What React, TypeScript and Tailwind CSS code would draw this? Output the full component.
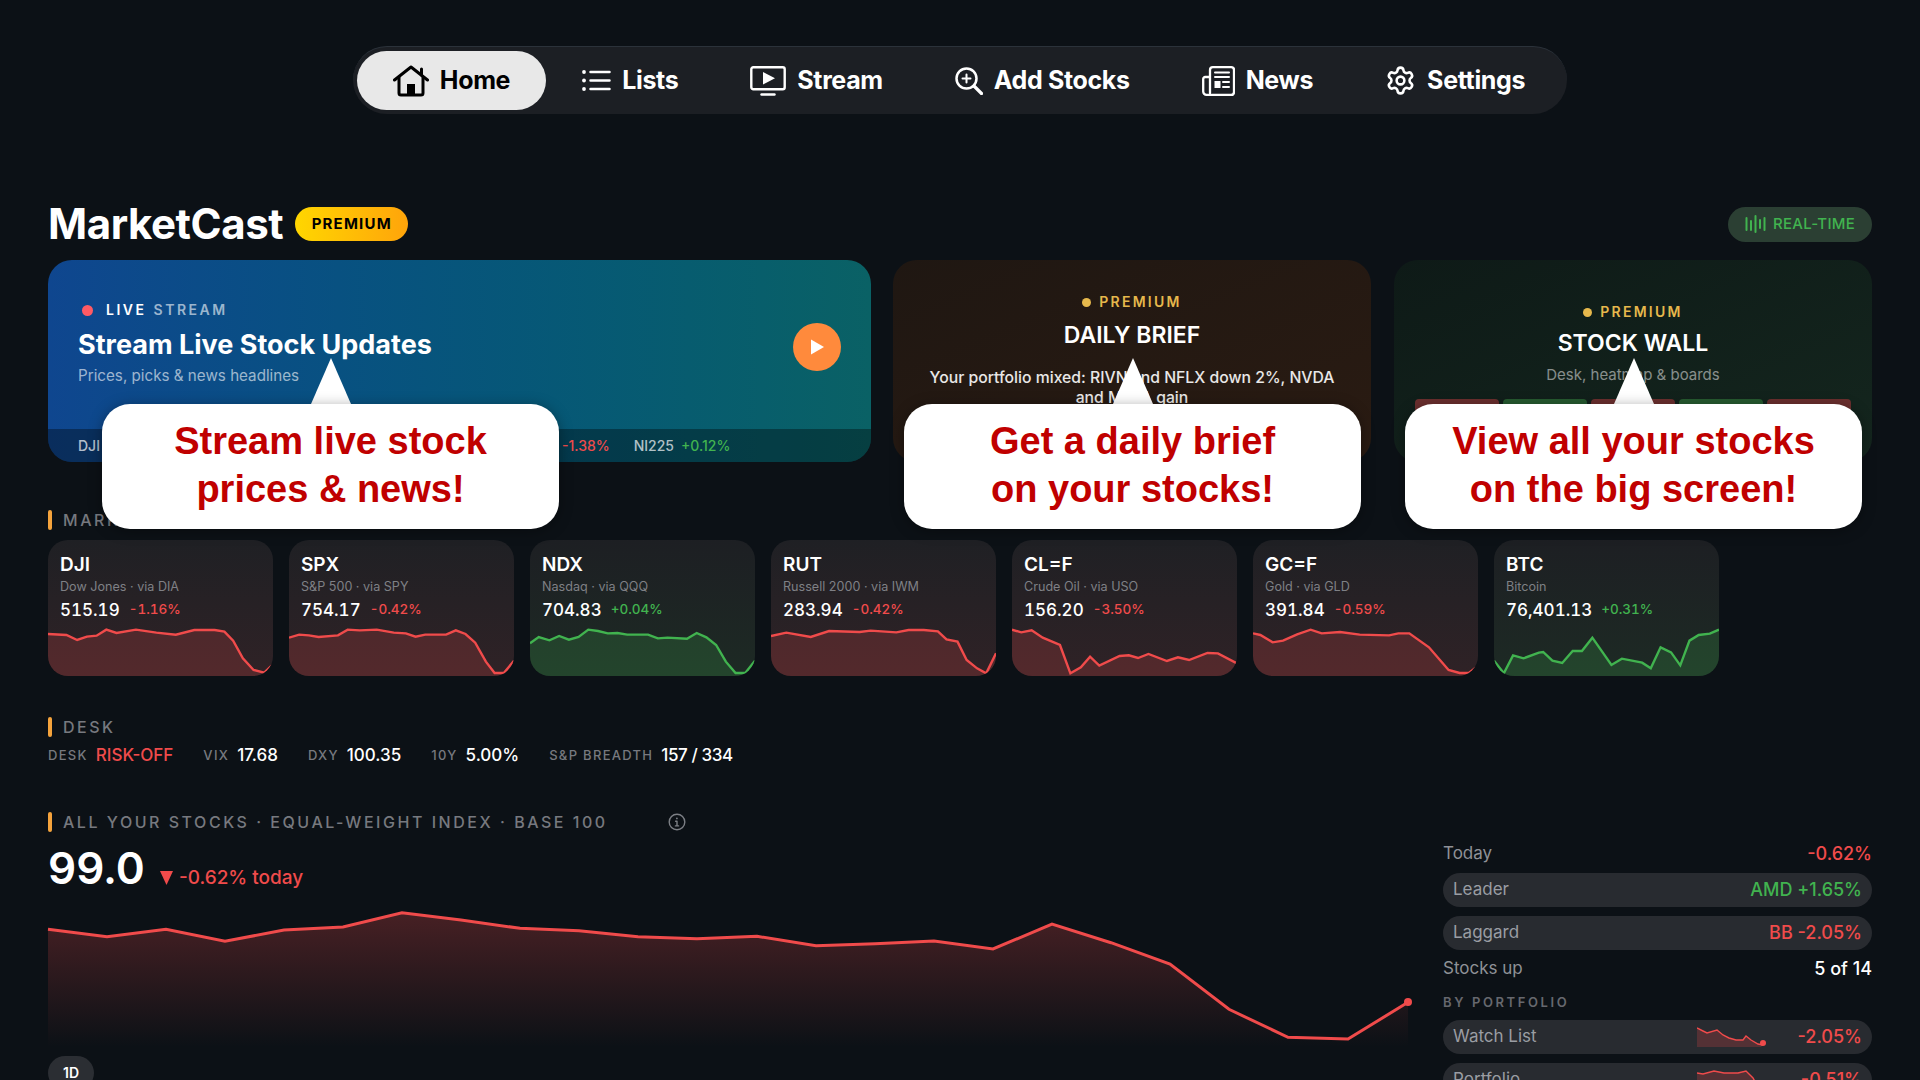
import { Settings } from 'lucide-react'

const RED = '#f04b4b'
const GREEN = '#41b34f'

type Market = {
  ticker: string
  name: string
  price: string
  change: string
  up: boolean
  ox: number
  w: number
  pts: string
}

const markets: Market[] = [
  {
    ticker: 'DJI',
    name: 'Dow Jones · via DIA',
    price: '515.19',
    change: '-1.16%',
    up: false,
    ox: 37,
    w: 463,
    pts: '37,312 75,315 97,330 117,320 137,317 157,299 178,309 218,299 260,308 300,314 338,300 380,300 400,305 418,332 438,385 460,420 482,428 500,403',
  },
  {
    ticker: 'SPX',
    name: 'S&P 500 · via SPY',
    price: '754.17',
    change: '-0.42%',
    up: false,
    ox: 534,
    w: 464,
    pts: '534,323 555,314 575,316 595,321 635,316 655,299 680,301 715,299 750,308 775,310 795,320 815,314 858,314 878,301 898,312 918,338 940,395 958,429 977,429 998,392',
  },
  {
    ticker: 'NDX',
    name: 'Nasdaq · via QQQ',
    price: '704.83',
    change: '+0.04%',
    up: true,
    ox: 1032,
    w: 463,
    pts: '1032,340 1050,321 1072,331 1092,318 1112,329 1132,321 1152,299 1172,303 1192,310 1212,309 1232,314 1275,314 1295,325 1315,323 1355,326 1375,309 1395,322 1415,345 1435,395 1455,429 1475,429 1495,392',
  },
  {
    ticker: 'RUT',
    name: 'Russell 2000 · via IWM',
    price: '283.94',
    change: '-0.42%',
    up: false,
    ox: -15,
    w: 368,
    pts: '-15,318 10,308 50,321 80,303 130,306 148,302 190,307 210,300 235,300 258,304 272,328 290,335 305,390 322,415 337,430 353,370',
  },
  {
    ticker: 'CL=F',
    name: 'Crude Oil · via USO',
    price: '156.20',
    change: '-3.50%',
    up: false,
    ox: 380,
    w: 366,
    pts: '380,299 395,307 412,301 430,323 458,345 475,430 492,412 507,380 522,407 555,378 570,376 585,384 602,372 632,393 650,382 668,390 698,369 715,370 746,400',
  },
  {
    ticker: 'GC=F',
    name: 'Gold · via GLD',
    price: '391.84',
    change: '-0.59%',
    up: false,
    ox: 773,
    w: 367,
    pts: '773,310 785,315 805,337 822,332 845,313 867,299 885,310 915,306 947,314 995,316 1010,310 1028,310 1060,352 1092,420 1110,429 1125,429 1140,408',
  },
  {
    ticker: 'BTC',
    name: 'Bitcoin',
    price: '76,401.13',
    change: '+0.31%',
    up: true,
    ox: 1167,
    w: 366,
    pts: '1167,392 1183,430 1198,376 1215,385 1240,368 1247,366 1262,392 1278,399 1295,363 1310,363 1327,323 1358,405 1375,386 1408,398 1422,415 1438,352 1455,367 1470,406 1485,332 1500,315 1518,311 1533,299',
  },
]

const tickers = [
  ['DJI', '-1.16%', false],
  ['SPX', '-0.42%', false],
  ['NDX', '+0.04%', true],
  ['RUT', '-0.42%', false],
  ['VIX', '-1.38%', false],
  ['NI225', '+0.12%', true],
] as const

const indexLine =
  '48,929.3 107,936.7 166,929.3 225,941.3 284,930 343,927 402,912.7 461,920 520,928.3 579,930.7 638,936.7 697,938.7 757,936.3 816,945.7 875,943.7 934,941 993,949 1052,924 1111,942.7 1170,964 1229,1009.3 1288,1037.3 1348,1039 1408,1002.3'

function HomeIcon() {
  return (
    <svg width="36" height="32" viewBox="0 0 36 32" fill="none" stroke="currentColor" strokeWidth="3" strokeLinecap="round" strokeLinejoin="round">
      <path d="M1.5 15 18 2l16.5 13" />
      <path d="M28.5 4v6" />
      <path d="M6 12v16a2 2 0 0 0 2 2h20a2 2 0 0 0 2-2V12" />
      <rect x="14" y="19" width="8" height="11" fill="currentColor" stroke="none" />
    </svg>
  )
}

function ListIcon() {
  return (
    <svg width="29" height="21" viewBox="0 0 29 21" fill="none" stroke="currentColor" strokeWidth="2.5" strokeLinecap="round">
      <circle cx="2" cy="2" r="1.9" fill="currentColor" stroke="none" />
      <circle cx="2" cy="10.5" r="1.9" fill="currentColor" stroke="none" />
      <circle cx="2" cy="19" r="1.9" fill="currentColor" stroke="none" />
      <path d="M8.5 2h19M8.5 10.5h19M8.5 19h19" />
    </svg>
  )
}

function StreamIcon() {
  return (
    <svg width="36" height="30" viewBox="0 0 36 30" fill="none" stroke="currentColor" strokeWidth="2.4" strokeLinecap="round" strokeLinejoin="round">
      <rect x="1.3" y="1.3" width="33.4" height="22" rx="2" />
      <path d="M13 6l12 6.3L13 18.6z" fill="currentColor" stroke="none" />
      <path d="M11.5 28.5h13" />
    </svg>
  )
}

function AddIcon() {
  return (
    <svg width="28" height="28" viewBox="0 0 28 28" fill="none" stroke="currentColor" strokeWidth="2.5" strokeLinecap="round">
      <circle cx="11.5" cy="11.5" r="10" />
      <path d="M11.5 7.5v8M7.5 11.5h8" strokeWidth="2" />
      <path d="M19 19l7.5 7.5" strokeWidth="3.2" />
    </svg>
  )
}

function NewsIcon() {
  return (
    <svg width="33" height="30" viewBox="0 0 33 30" fill="none" stroke="currentColor" strokeWidth="2.3" strokeLinecap="round" strokeLinejoin="round">
      <path d="M8 27V4a2.8 2.8 0 0 1 2.8-2.8h18.4A2.8 2.8 0 0 1 32 4v22a2.8 2.8 0 0 1-2.8 2.8H4.5A3.3 3.3 0 0 1 1.2 25.5V13a2 2 0 0 1 2-2H8" />
      <path d="M13 6.5h14M13 11h14M21 16h6M21 21h6" strokeWidth="2" />
      <rect x="12.5" y="15" width="6" height="7" fill="currentColor" stroke="none" />
    </svg>
  )
}

function PulseIcon() {
  return (
    <svg width="21" height="18" viewBox="0 0 21 18" fill="none" stroke="currentColor" strokeWidth="2" strokeLinecap="round">
      <path d="M1.5 3v12M6 6v9M10.5 1v16M15 5v8M19.5 3v12" />
    </svg>
  )
}

function InfoIcon() {
  return (
    <svg width="18" height="18" viewBox="0 0 18 18" fill="none" stroke="#7c7f85" strokeWidth="1.4" strokeLinecap="round">
      <circle cx="9" cy="9" r="7.8" />
      <path d="M9 8.2v4.6M7.4 12.9h3.2M7.6 8.2H9" />
      <circle cx="8.9" cy="5.4" r="0.9" fill="#7c7f85" stroke="none" />
    </svg>
  )
}

function NavItem({ label, icon, active }: { label: string; icon: React.ReactNode; active?: boolean }) {
  return (
    <div
      className={
        active
          ? 'flex h-[59px] items-center gap-[11px] rounded-full bg-[#e8e8e8] px-9 text-black'
          : 'flex h-[59px] items-center gap-[11px] px-9 text-white'
      }
    >
      {icon}
      <span className="text-[25px] leading-none font-bold tracking-[-0.014em]">{label}</span>
    </div>
  )
}

function SectionLabel({ children }: { children: React.ReactNode }) {
  return (
    <div className="flex h-5 items-center gap-[11px]">
      <span className="h-5 w-1 rounded-full bg-[#f5a33c]" />
      <span className="text-base font-medium tracking-[0.158em] whitespace-nowrap text-[#77797f]">{children}</span>
    </div>
  )
}

function Premium() {
  return (
    <div className="flex h-5 items-center gap-2 text-sm font-semibold tracking-[0.16em] text-[#e6b84c]">
      <span className="h-[9px] w-[9px] rounded-full bg-[#e6b84c]" />
      PREMIUM
    </div>
  )
}

function Callout({ line1, line2, className }: { line1: string; line2: string; className: string }) {
  return (
    <div className={`absolute top-[358px] flex w-[457px] flex-col items-center ${className}`}>
      <div className="h-0 w-0 border-x-[20px] border-b-[46px] border-x-transparent border-b-white" />
      <div className="flex h-[125px] w-full flex-col items-center justify-center rounded-[28px] bg-white pb-[4px] font-['Liberation_Sans',sans-serif] text-[38px] leading-[48px] font-bold text-[#c00000] shadow-[0_2px_14px_rgba(0,0,0,0.35)]">
        <span>{line1}</span>
        <span>{line2}</span>
      </div>
    </div>
  )
}

function MarketCard({ m }: { m: Market }) {
  const color = m.up ? GREEN : RED
  return (
    <div
      className={
        m.up
          ? 'flex h-[136px] w-[225px] flex-col overflow-hidden rounded-[20px] bg-gradient-to-b from-[#1d1f23] to-[#1d2a24]'
          : 'flex h-[136px] w-[225px] flex-col overflow-hidden rounded-[20px] bg-gradient-to-b from-[#1f2024] to-[#2f2226]'
      }
    >
      <div className="h-[80px] px-3 pt-[14px]">
        <div className="h-[22px] text-[19px] leading-[22px] font-semibold text-white">{m.ticker}</div>
        <div className="mt-[2px] h-[17px] text-[12.6px] leading-[17px] text-[#7f8085]">{m.name}</div>
        <div className="mt-[4px] flex h-[22px] items-center gap-[9px] tabular-nums">
          <span className="text-[17px] leading-none font-medium text-white">{m.price}</span>
          <span className={m.up ? 'text-[13.5px] leading-none font-medium text-[#41b34f]' : 'text-[13.5px] leading-none font-medium text-[#f04b4b]'}>
            {m.change}
          </span>
        </div>
      </div>
      <svg className="h-14 w-full" viewBox={`${m.ox} 270 ${m.w} 168`} preserveAspectRatio="none">
        <polygon points={`${m.ox},438 ${m.pts} ${m.ox + m.w},438`} fill={color} fillOpacity="0.19" />
        <polyline points={m.pts} fill="none" stroke={color} strokeWidth="2.4" vectorEffect="non-scaling-stroke" />
      </svg>
    </div>
  )
}

function DeskStat({ label, value, valueClass = 'text-white' }: { label: string; value: string; valueClass?: string }) {
  return (
    <div className="flex items-center gap-2">
      <span className="text-[13px] font-medium tracking-[0.1em] text-[#77797f]">{label}</span>
      <span className={`text-[17px] font-medium ${valueClass}`}>{value}</span>
    </div>
  )
}

function StatPill({ label, value, valueClass }: { label: string; value: string; valueClass: string }) {
  return (
    <div className="flex h-[34px] items-center justify-between rounded-full bg-[#282b30] px-[10px]">
      <span className="text-[17px] text-[#9a9da3]">{label}</span>
      <span className={`text-lg font-medium ${valueClass}`}>{value}</span>
    </div>
  )
}

function PortfolioPill({ label, value, pts, dot }: { label: string; value: string; pts: string; dot: [number, number] }) {
  return (
    <div className="flex h-[34px] items-center rounded-full bg-[#282b30] px-[10px]">
      <span className="flex-1 text-[17px] text-[#9a9da3]">{label}</span>
      <svg width="70" height="20" viewBox="0 0 70 20" fill="none">
        <polygon points={`0,20 ${pts} 64,20`} fill={RED} fillOpacity="0.22" />
        <polyline points={pts} stroke={RED} strokeWidth="1.4" />
        <circle cx={dot[0]} cy={dot[1]} r="3" fill={RED} />
      </svg>
      <span className="w-[95px] text-right text-lg font-medium text-[#f04b4b]">{value}</span>
    </div>
  )
}

export default function App() {
  return (
    <div className="relative h-[1080px] w-[1920px] overflow-hidden bg-[#0c1116] font-['Inter',sans-serif]">
      <div className="flex justify-center pt-[46px]">
        <nav className="flex h-[68px] items-center rounded-full border-t border-[#2b323a] bg-[#1c1f24] px-[4px] pr-[6px]">
          <NavItem label="Home" icon={<HomeIcon />} active />
          <NavItem label="Lists" icon={<ListIcon />} />
          <NavItem label="Stream" icon={<StreamIcon />} />
          <NavItem label="Add Stocks" icon={<AddIcon />} />
          <NavItem label="News" icon={<NewsIcon />} />
          <NavItem label="Settings" icon={<Settings size={31} strokeWidth={2} />} />
        </nav>
      </div>

      <main className="px-12">
        <header className="mt-[92px] flex h-9 items-center">
          <h1 className="text-[42px] leading-none font-bold tracking-[-0.01em] text-white">MarketCast</h1>
          <span className="ml-3 flex h-[34px] w-[113px] items-center justify-center rounded-full bg-gradient-to-r from-[#ffd600] to-[#ffa40a] text-[15px] font-bold tracking-[0.08em] text-black">
            PREMIUM
          </span>
          <span className="ml-auto flex h-[35px] w-[144px] items-center justify-center gap-[7px] rounded-full bg-[#2b3f33] text-[15px] font-medium tracking-[0.02em] text-[#41b34f]">
            <PulseIcon />
            REAL-TIME
          </span>
        </header>

        <section className="mt-[18px] flex h-[202px] gap-[22px]">
          <div className="flex w-[823px] flex-col overflow-hidden rounded-[24px] bg-gradient-to-r from-[#0f468f] to-[#0a6165]">
            <div className="flex flex-1 items-center justify-between pr-[30px] pl-[30px]">
              <div className="mb-[3px]">
                <div className="flex h-5 items-center text-sm font-semibold tracking-[0.18em]">
                  <span className="mr-[13px] ml-1 h-[11px] w-[11px] rounded-full bg-[#ff5a64]" />
                  <span className="text-white">LIVE</span>
                  <span className="ml-[7px] text-white/60">STREAM</span>
                </div>
                <div className="mt-[8px] text-[27px] leading-[34px] font-bold text-white">Stream Live Stock Updates</div>
                <div className="mt-[4px] text-[15.2px] leading-5 text-white/60">Prices, picks &amp; news headlines</div>
              </div>
              <div className="mt-[4px] flex h-12 w-12 items-center justify-center rounded-full bg-[#ff8a3c]">
                <svg width="16" height="18" viewBox="0 0 16 18" fill="white">
                  <path d="M2 1.5 15 9 2 16.5z" />
                </svg>
              </div>
            </div>
            <div className="flex h-[33px] items-center gap-6 bg-black/35 pl-[30px] text-sm font-medium">
              {tickers.map(([name, change, up]) => (
                <div key={name} className="flex items-center gap-[7px] first:mr-[21px]">
                  <span className="text-white/70">{name}</span>
                  <span className={up ? 'text-[#41b34f]' : 'text-[#f04b4b]'}>{change}</span>
                </div>
              ))}
            </div>
          </div>

          <div className="flex w-[478px] flex-col items-center rounded-[24px] bg-gradient-to-br from-[#1f1712] to-[#2a1b12] pt-[32px]">
            <Premium />
            <div className="mt-[8px] text-[23px] leading-[30px] font-semibold text-white">DAILY BRIEF</div>
            <p className="mt-[18px] w-[430px] text-center text-[15.75px] leading-5 font-medium text-white/90">
              Your portfolio mixed: RIVN and NFLX down 2%, NVDA and META gain
            </p>
          </div>

          <div className="ml-px flex w-[478px] flex-col items-center rounded-[24px] bg-gradient-to-br from-[#0e1a17] to-[#14261e] pt-[42px]">
            <Premium />
            <div className="mt-[6px] text-[23px] leading-[30px] font-semibold text-white">STOCK WALL</div>
            <div className="mt-[7px] text-[15px] leading-5 text-white/50">Desk, heatmap &amp; boards</div>
            <div className="mt-[14px] flex gap-1">
              <span className="h-[40px] w-[84px] rounded-[4px] bg-[#6b2f2e]" />
              <span className="h-[40px] w-[84px] rounded-[4px] bg-[#265a30]" />
              <span className="h-[40px] w-[84px] rounded-[4px] bg-[#6b2f2e]" />
              <span className="h-[40px] w-[84px] rounded-[4px] bg-[#265a30]" />
              <span className="h-[40px] w-[84px] rounded-[4px] bg-[#6b2f2e]" />
            </div>
          </div>
        </section>

        <div className="mt-[48px]">
          <SectionLabel>MARKETS</SectionLabel>
        </div>
        <div className="mt-[10px] flex gap-4">
          {markets.map((m) => (
            <MarketCard key={m.ticker} m={m} />
          ))}
        </div>

        <div className="mt-[41px]">
          <SectionLabel>DESK</SectionLabel>
        </div>
        <div className="mt-[7px] flex h-6 items-center gap-[30px]">
          <DeskStat label="DESK" value="RISK-OFF" valueClass="text-[#f04b4b]" />
          <DeskStat label="VIX" value="17.68" />
          <DeskStat label="DXY" value="100.35" />
          <DeskStat label="10Y" value="5.00%" />
          <DeskStat label="S&P BREADTH" value="157 / 334" valueClass="text-white tracking-[-0.025em]" />
        </div>

        <div className="mt-[44px] flex justify-between">
          <div className="w-[1361px]">
            <div className="flex items-center">
              <SectionLabel>ALL YOUR STOCKS · EQUAL-WEIGHT INDEX · BASE 100</SectionLabel>
              <span className="ml-[60px]">
                <InfoIcon />
              </span>
            </div>
            <div className="mt-[13px] flex h-[46px] items-center">
              <span className="text-[44px] leading-none font-semibold text-white">99.0</span>
              <svg className="mt-[20px] ml-[15px]" width="13" height="14" viewBox="0 0 13 14" fill={RED}>
                <path d="M0 0h13L6.5 14z" />
              </svg>
              <span className="mt-[20px] ml-[6px] text-[19px] font-medium text-[#f04b4b]">-0.62% today</span>
            </div>
            <svg className="mt-[14px] block overflow-visible" width="1361" height="142" viewBox="48 905 1361 142">
              <defs>
                <linearGradient id="indexFill" x1="0" y1="0" x2="0" y2="1">
                  <stop offset="0" stopColor={RED} stopOpacity="0.26" />
                  <stop offset="1" stopColor={RED} stopOpacity="0" />
                </linearGradient>
              </defs>
              <polygon points={`48,1047 ${indexLine} 1408,1047`} fill="url(#indexFill)" />
              <polyline points={indexLine} fill="none" stroke={RED} strokeWidth="3" />
              <circle cx="1408" cy="1002" r="4" fill={RED} />
            </svg>
            <div className="mt-[9px] flex h-[34px] w-[46px] items-center justify-center rounded-full bg-[#2b2e33] text-sm font-semibold text-white">
              1D
            </div>
          </div>

          <aside className="mt-[32px] flex w-[429px] flex-col gap-[9px]">
            <div className="flex h-5 items-center justify-between">
              <span className="text-[17px] text-[#8f9197]">Today</span>
              <span className="text-lg font-medium text-[#f04b4b]">-0.62%</span>
            </div>
            <StatPill label="Leader" value="AMD +1.65%" valueClass="text-[#41b34f]" />
            <StatPill label="Laggard" value="BB -2.05%" valueClass="text-[#f04b4b]" />
            <div className="flex h-5 items-center justify-between">
              <span className="text-[17px] text-[#8f9197]">Stocks up</span>
              <span className="text-lg font-medium text-white">5 of 14</span>
            </div>
            <div className="mt-[7px] mb-[2px] h-[14px] text-[13px] leading-[14px] font-semibold tracking-[0.2em] text-[#66686e]">BY PORTFOLIO</div>
            <PortfolioPill
              label="Watch List"
              value="-2.05%"
              pts="0,1 6,4 10,6 20,3 26,8 32,11 39,13 46,13 49,9 54,13 61,17 66,18"
              dot={[66, 16]}
            />
            <PortfolioPill
              label="Portfolio"
              value="-0.51%"
              pts="0,3 6,4 17,1 27,3 41,3 49,1 56,8 61,17 66,19"
              dot={[66, 18]}
            />
          </aside>
        </div>
      </main>

      <Callout className="left-[102px]" line1="Stream live stock" line2="prices & news!" />
      <Callout className="left-[904px]" line1="Get a daily brief" line2="on your stocks!" />
      <Callout className="left-[1405px]" line1="View all your stocks" line2="on the big screen!" />
    </div>
  )
}
